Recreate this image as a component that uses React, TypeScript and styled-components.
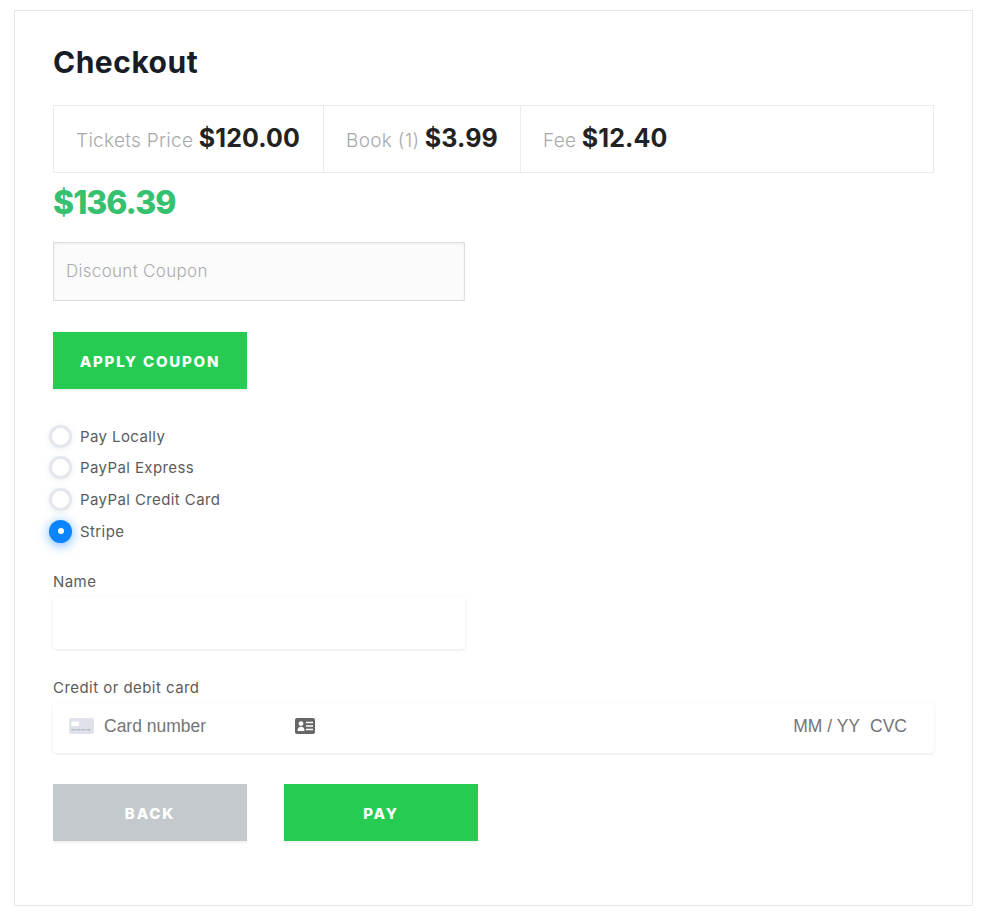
import React from "react"
import styled, { createGlobalStyle } from "styled-components"

const Global = createGlobalStyle`
    * { box-sizing: border-box; }
    body {
        margin: 0;
        background: #fff;
        font-family: Inter, "Open Sans", sans-serif;
    }
`

const Page = styled.div`
    padding: 10px 15px 14px 14px;
`

const Card = styled.section`
    height: 896px;
    border: 1px solid #e6e6e6;
    padding: 32px 38px 0;
    display: flex;
    flex-direction: column;
    align-items: flex-start;
`

const Title = styled.h1`
    margin: 0 0 23px;
    height: 39px;
    font-size: 30px;
    line-height: 39px;
    font-weight: 700;
    letter-spacing: 0.5px;
    color: #171c26;
`

const Summary = styled.div`
    display: flex;
    width: 100%;
    height: 68px;
    border: 1px solid #ececec;
`

const SummaryCell = styled.div<{ $width?: number }>`
    width: ${p => p.$width}px;
    display: flex;
    align-items: baseline;
    gap: 5.5px;
    padding: 17px 0 0 22px;
    border-right: 1px solid #ececec;

    &:last-child {
        flex: 1;
        border-right: none;
    }
`

const SummaryLabel = styled.span`
    font-size: 19px;
    font-weight: 300;
    letter-spacing: 0.3px;
    color: #a9a9a9;
`

const SummaryValue = styled.b`
    font-size: 25px;
    font-weight: 700;
    letter-spacing: 0.1px;
    color: #222;
`

const Total = styled.div`
    margin-top: 8px;
    height: 44px;
    font-size: 32px;
    line-height: 44px;
    font-weight: 800;
    letter-spacing: -1px;
    color: #35c16f;
`

const CouponInput = styled.input`
    width: 412px;
    height: 59px;
    margin-top: 17px;
    padding: 0 12px 2px;
    background: #fbfbfb;
    border: 1px solid #dedede;
    box-shadow: inset 0 1px 3px rgba(0, 0, 0, 0.06);
    font-family: inherit;
    font-size: 17px;
    font-weight: 300;
    letter-spacing: 0.3px;
    outline: none;

    &::placeholder {
        color: #ababab;
        opacity: 1;
    }
`

const Button = styled.button<{ $muted?: boolean }>`
    width: 194px;
    height: 57px;
    border: none;
    padding: 2px 0 0;
    background: ${p => (p.$muted ? "#c4c9cd" : "#26cc52")};
    box-shadow: 0 2px 2px rgba(0, 0, 0, 0.06);
    color: #fff;
    font-family: inherit;
    font-size: 15px;
    font-weight: 800;
    letter-spacing: 1.8px;
    text-transform: uppercase;
`

const ApplyButton = styled(Button)`
    margin-top: 31px;
`

const Methods = styled.div`
    margin-top: 36px;
    margin-left: -4px;
    display: flex;
    flex-direction: column;
    gap: 9.7px;
`

const Method = styled.label`
    display: flex;
    align-items: center;
    gap: 8px;
    height: 22px;
    font-size: 15px;
    font-weight: 400;
    letter-spacing: 0.4px;
    color: #5c5c5c;
`

const Radio = styled.span<{ $checked?: boolean }>`
    width: 23px;
    height: 23px;
    border-radius: 50%;
    display: flex;
    align-items: center;
    justify-content: center;
    background: ${p => (p.$checked ? "#0a84ff" : "#fff")};
    border: ${p => (p.$checked ? "none" : "3px solid #e3e8ef")};
    box-shadow: ${p => (p.$checked ? "0 2px 12px rgba(10, 132, 255, 0.6)" : "0 1px 6px rgba(0, 0, 0, 0.08)")};

    &::after {
        content: "";
        display: ${p => (p.$checked ? "block" : "none")};
        width: 6px;
        height: 6px;
        border-radius: 50%;
        background: #fff;
    }
`

const FieldLabel = styled.div<{ $top: number }>`
    margin-top: ${p => p.$top}px;
    height: 18px;
    font-size: 15px;
    line-height: 18px;
    letter-spacing: 0.45px;
    color: #5c5c5c;
`

const NameField = styled.input`
    width: 412px;
    height: 52px;
    margin-top: 6px;
    border: none;
    border-radius: 4px;
    background: #fff;
    box-shadow: 0 1px 3px rgba(50, 60, 90, 0.12);
    outline: none;
`

const CardField = styled.div`
    width: 100%;
    height: 50px;
    margin-top: 6px;
    padding: 0 27px 4px 16px;
    display: flex;
    align-items: center;
    border-radius: 4px;
    background: #fff;
    box-shadow: 0 1px 3px rgba(50, 60, 90, 0.12);
    font-family: "Liberation Sans", Arial, sans-serif;
    font-size: 17.5px;
    color: #757575;
`

const CardNumber = styled.span`
    margin-left: 10px;
    width: 191px;
`

const CardEnd = styled.span`
    margin-left: auto;
    display: flex;
    gap: 10px;
`

const Actions = styled.div`
    margin-top: 31px;
    display: flex;
    gap: 37px;
`

const CardBrandIcon = () => (
    <svg width="25" height="16" viewBox="0 0 25 16">
        <rect width="25" height="16" rx="2" fill="#dfe2ea" />
        <rect x="2.5" y="3.5" width="7.5" height="4.5" rx="0.5" fill="#fff" />
        <path d="M2.5 11.8h20" stroke="#b4b9c6" strokeWidth="1.6" strokeDasharray="4 1" />
    </svg>
)

const IdCardIcon = () => (
    <svg width="20" height="16" viewBox="0 0 20 16">
        <rect width="20" height="16" rx="2" fill="#666" />
        <circle cx="6" cy="5.6" r="2.4" fill="#fff" />
        <path d="M2.5 13c0-3 1.4-4.3 3.5-4.3s3.5 1.3 3.5 4.3z" fill="#fff" />
        <path d="M11 4.5h7M11 8h7M11 11.5h7" stroke="#fff" strokeWidth="1.7" />
    </svg>
)

const methods = ["Pay Locally", "PayPal Express", "PayPal Credit Card", "Stripe"]

const App = () => (
    <Page>
        <Global />
        <Card>
            <Title>Checkout</Title>
            <Summary>
                <SummaryCell $width={270}>
                    <SummaryLabel>Tickets Price</SummaryLabel>
                    <SummaryValue>$120.00</SummaryValue>
                </SummaryCell>
                <SummaryCell $width={197}>
                    <SummaryLabel>Book (1)</SummaryLabel>
                    <SummaryValue>$3.99</SummaryValue>
                </SummaryCell>
                <SummaryCell>
                    <SummaryLabel>Fee</SummaryLabel>
                    <SummaryValue>$12.40</SummaryValue>
                </SummaryCell>
            </Summary>
            <Total>$136.39</Total>
            <CouponInput placeholder="Discount Coupon" />
            <ApplyButton>Apply Coupon</ApplyButton>
            <Methods>
                {methods.map(m => (
                    <Method key={m}>
                        <Radio $checked={m === "Stripe"} />
                        {m}
                    </Method>
                ))}
            </Methods>
            <FieldLabel $top={31}>Name</FieldLabel>
            <NameField />
            <FieldLabel $top={30}>Credit or debit card</FieldLabel>
            <CardField>
                <CardBrandIcon />
                <CardNumber>Card number</CardNumber>
                <IdCardIcon />
                <CardEnd>
                    <span>MM / YY</span>
                    <span>CVC</span>
                </CardEnd>
            </CardField>
            <Actions>
                <Button $muted>Back</Button>
                <Button>Pay</Button>
            </Actions>
        </Card>
    </Page>
)

export default App
